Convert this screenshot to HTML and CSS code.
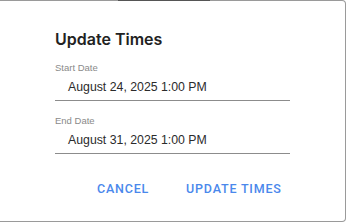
FILE: index.html
```html
<!DOCTYPE html>
<html lang="en">
<head>
    <meta charset="UTF-8">
    <meta name="viewport" content="width=device-width, initial-scale=1.0">
    <title>Update Times</title>
    <link rel="stylesheet" href="styles.css">
</head>
<body>

    <!-- Backdrop text peeking above the dialog -->
    <div class="backdrop-strip"></div>

    <!-- Dialog -->
    <div class="dialog">
        <h2 class="dialog-title">Update Times</h2>

        <div class="field">
            <label class="field-label">Start Date</label>
            <div class="field-input">August 24, 2025 1:00 PM</div>
        </div>

        <div class="field">
            <label class="field-label">End Date</label>
            <div class="field-input">August 31, 2025 1:00 PM</div>
        </div>

        <div class="dialog-actions">
            <button class="action-btn">Cancel</button>
            <button class="action-btn">Update Times</button>
        </div>
    </div>

</body>
</html>
```

FILE: styles.css
```css
/* Page */
body {
    margin: 0;
    background: #ffffff;
    font-family: "Liberation Sans", Arial, sans-serif;
    width: 347px;
    height: 223px;
    overflow: hidden;
    position: relative;
}

.backdrop-strip {
    position: absolute;
    top: 0;
    left: 118px;
    width: 92px;
    height: 1px;
    background: #555;
    z-index: 2;
}

/* Dialog */
.dialog {
    box-sizing: border-box;
    width: 346px;
    height: 222px;
    background: #fff;
    border-top: 1px solid #9a9a9a;
    border-right: 1px solid #9a9a9a;
    border-bottom: 1px solid #9a9a9a;
    border-radius: 0 4px 4px 0;
    padding: 28px 0 0 55px;
}

.dialog-title {
    margin: 0 0 13px;
    font-family: "Inter", sans-serif;
    font-size: 16px;
    font-weight: 600;
    color: #222;
    line-height: 20px;
}

/* Fields */
.field {
    width: 235px;
    margin-bottom: 14px;
}

.field-label {
    display: block;
    font-size: 9.5px;
    color: #8a8a8a;
    line-height: 12px;
}

.field-input {
    font-size: 12.3px;
    color: #2b2b2b;
    padding: 5px 0 5px 13px;
    line-height: 16px;
    border-bottom: 1px solid #8c8c8c;
}

/* Actions */
.dialog-actions {
    display: flex;
    gap: 37px;
    padding: 13px 0 0 42px;
}

.action-btn {
    background: none;
    border: none;
    padding: 0;
    font-family: "Roboto", sans-serif;
    font-size: 12.5px;
    font-weight: 500;
    letter-spacing: 0.8px;
    text-transform: uppercase;
    color: #4a88ec;
    cursor: pointer;
}
```
